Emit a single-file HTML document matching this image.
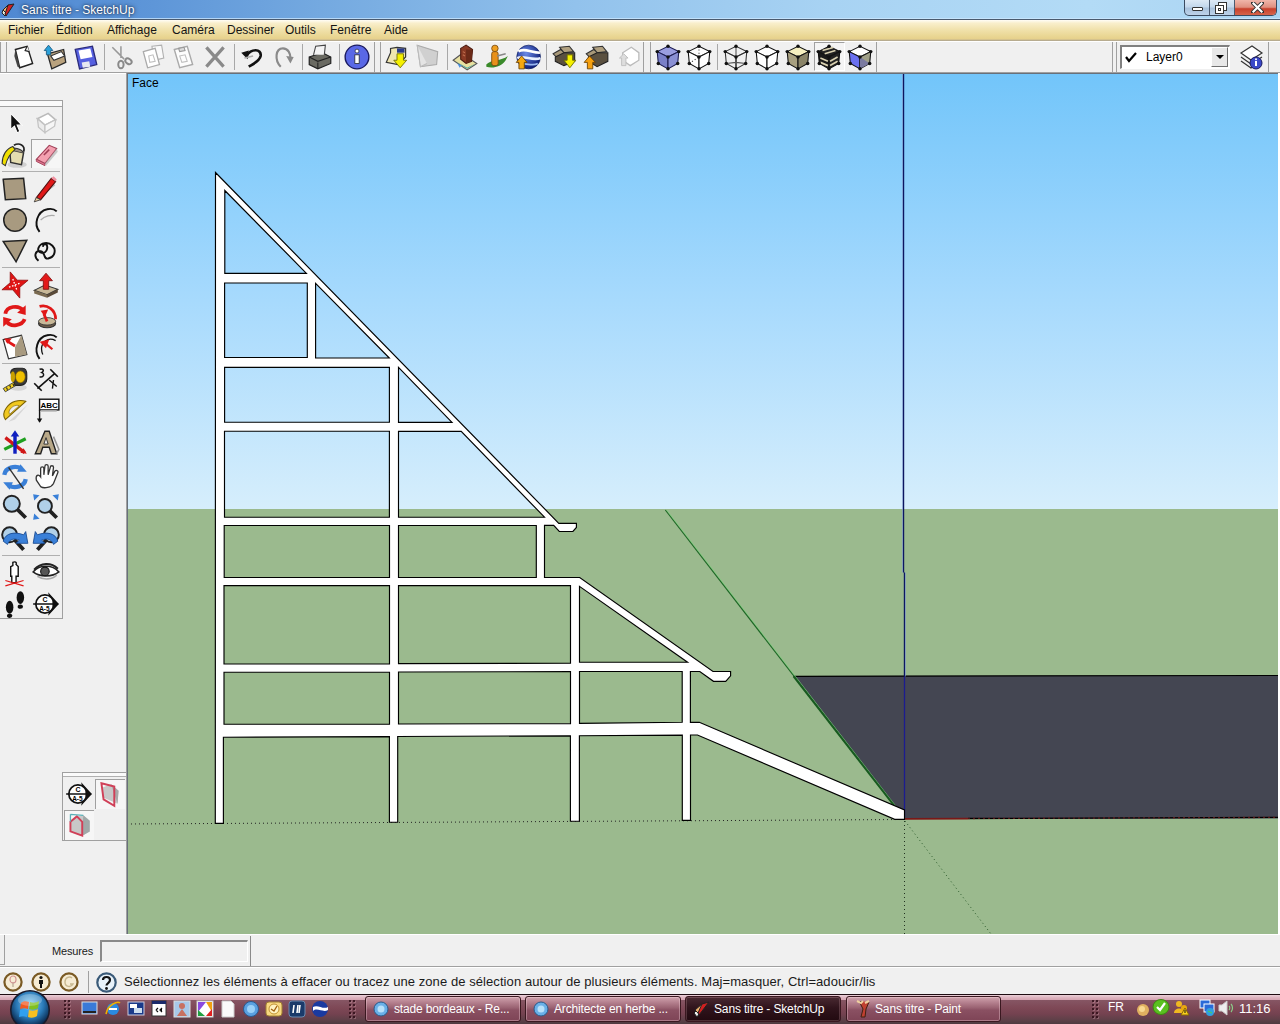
<!DOCTYPE html>
<html><head><meta charset="utf-8">
<style>
*{margin:0;padding:0;box-sizing:border-box}
html,body{width:1280px;height:1024px;overflow:hidden;background:#f0f0f0;font-family:"Liberation Sans",sans-serif;font-size:12px;color:#000}
.a{position:absolute}
svg{display:block}
#title{left:0;top:0;width:1280px;height:20px;background:linear-gradient(90deg,#4f88d2 0%,#5e96d8 12%,#74a9e0 25%,#92c2ec 45%,#a8d3f3 65%,#b3dbf6 85%,#aad4f2 100%);border-bottom:1px solid #4a5a6e}
#title .t{left:21px;top:3px;color:#fff;font-size:12px;line-height:14px;text-shadow:0 0 4px rgba(20,40,70,.9),0 0 2px rgba(20,40,70,.8)}
#menu{left:0;top:20px;width:1280px;height:21px;background:linear-gradient(#fffdf6 0%,#f9efcc 15%,#f1e2ad 45%,#ead795 75%,#e6d18c 90%,#c9b98e 95%,#a8a090 100%)}
#menu span{position:absolute;top:3px;font-size:12px;line-height:14px;color:#141414}
#tb{left:0;top:41px;width:1280px;height:33px;background:#f0f0f0}
.sep{position:absolute;width:1px;background:#a8a8a8}
#left{left:0;top:74px;width:128px;height:861px;background:#f0f0f0}
#vp{left:128px;top:74px;width:1150px;height:860px;overflow:hidden}
#meas{left:0;top:934px;width:1280px;height:33px;background:#f0f0f0}
#status{left:0;top:967px;width:1280px;height:27px;background:#f0f0f0}
#task{left:0;top:994px;width:1280px;height:30px;background:linear-gradient(#1e0c12 0,#1e0c12 1px,#ead0d8 1px,#dcb0bc 4px,#d4a4b2 6px,#865664 6px,#7e4856 14px,#744250 20px,#5e4048 26px,#4e3a40 100%)}
.tbtn{position:absolute;top:2px;height:26px;border:1px solid #3a1820;border-radius:3px;background:linear-gradient(#d0a4ae 0%,#b88492 20%,#9a6272 45%,#8a5062 55%,#7e4456 100%);color:#fff;font-size:12px;line-height:14px;letter-spacing:-0.15px;box-shadow:inset 0 0 0 1px rgba(255,220,230,.35)}
.tbtn span{position:absolute;left:28px;top:5px;white-space:nowrap}
.tbtn.act{background:linear-gradient(#4a2a32 0%,#30141c 45%,#220a10 100%);box-shadow:inset 0 0 0 1px rgba(255,200,210,.2)}
</style></head><body>

<div id="title" class="a">
<div class="a" style="left:0;top:18px;width:1280px;height:1px;background:rgba(205,232,255,.75)"></div>
<svg class="a" style="left:1px;top:2px" width="15" height="16" viewBox="0 0 15 16"><path d="M2 8 L7 3 L10 5 L5 11 Z" fill="#f0b070" stroke="#222" stroke-width="1"/><path d="M2 8 L5 11 L4 14 L1 11 Z" fill="#e8f0e0" stroke="#222" stroke-width="1"/><path d="M7 3 L13 2 L5 14 L4 12 Z" fill="#d02020" stroke="#222" stroke-width="1"/></svg>
<div class="a t">Sans titre - SketchUp</div>
<div class="a" style="left:1184px;top:0;width:93px;height:16px;border:1px solid #3a4a60;border-top:none;border-radius:0 0 5px 5px;overflow:hidden;background:linear-gradient(#dce9f5 0%,#c4d8ec 45%,#a9c2dc 55%,#bdd3ea 100%)">
<div class="a" style="left:24px;top:0;width:1px;height:16px;background:#4a5a70"></div>
<div class="a" style="left:49px;top:0;width:1px;height:16px;background:#4a5a70"></div>
<div class="a" style="left:50px;top:0;width:43px;height:16px;background:linear-gradient(#f0b6aa 0%,#e09080 45%,#c8402c 55%,#d86a50 100%)"></div>
<div class="a" style="left:7px;top:7px;width:11px;height:4px;background:#fff;border:1px solid #333;border-radius:1px"></div>
<div class="a" style="left:33px;top:2px;width:9px;height:9px;background:#fff;border:1px solid #333"></div>
<div class="a" style="left:30px;top:5px;width:9px;height:9px;background:#fff;border:1px solid #333"><div class="a" style="left:2px;top:2px;width:3px;height:3px;border:1px solid #333"></div></div>
<svg class="a" style="left:66px;top:2px" width="13" height="11" viewBox="0 0 13 11"><path d="M2 1 L11 10 M11 1 L2 10" stroke="#333" stroke-width="4" stroke-linecap="square"/><path d="M2.5 1.5 L10.5 9.5 M10.5 1.5 L2.5 9.5" stroke="#fff" stroke-width="2.2" stroke-linecap="square"/></svg>
</div>
</div>
<div id="menu" class="a">
<span style="left:8px">Fichier</span><span style="left:56px">Édition</span><span style="left:107px">Affichage</span><span style="left:172px">Caméra</span><span style="left:227px">Dessiner</span><span style="left:285px">Outils</span><span style="left:330px">Fenêtre</span><span style="left:384px">Aide</span>
</div>
<div id="tb" class="a">
<div class="a" style="left:0;top:0;width:1280px;height:1px;background:#fff"></div>
<div class="a" style="left:0;top:31px;width:1280px;height:1px;background:#a0a0a0"></div>
<div class="a" style="left:0;top:32px;width:126px;height:1px;background:#fff"></div>
<div class="a" style="left:126px;top:32px;width:1152px;height:1px;background:#68707a"></div>
<div class="a" style="left:1278px;top:32px;width:2px;height:1px;background:#fff"></div>
<div class="a" style="left:0px;top:1px;width:1px;height:30px;background:#a0a0a0"></div>
<div class="a" style="left:6px;top:1px;width:1px;height:30px;background:#a0a0a0"></div>
<div class="a" style="left:374px;top:1px;width:1px;height:30px;background:#a0a0a0"></div>
<div class="a" style="left:380px;top:1px;width:1px;height:30px;background:#a0a0a0"></div>
<div class="a" style="left:643px;top:1px;width:1px;height:30px;background:#a0a0a0"></div>
<div class="a" style="left:650px;top:1px;width:1px;height:30px;background:#a0a0a0"></div>
<div class="a" style="left:876px;top:1px;width:1px;height:30px;background:#a0a0a0"></div>
<div class="a" style="left:1112px;top:1px;width:1px;height:30px;background:#a0a0a0"></div>
<div class="a" style="left:1116px;top:1px;width:1px;height:30px;background:#a0a0a0"></div>
<div class="a" style="left:1268px;top:1px;width:1px;height:30px;background:#a0a0a0"></div>
<div class="sep" style="left:104px;top:3px;height:26px"></div>
<div class="sep" style="left:234px;top:3px;height:26px"></div>
<div class="sep" style="left:302px;top:3px;height:26px"></div>
<div class="sep" style="left:339px;top:3px;height:26px"></div>
<div class="sep" style="left:447px;top:3px;height:26px"></div>
<div class="sep" style="left:546px;top:3px;height:26px"></div>
<div class="sep" style="left:717px;top:3px;height:26px"></div>
<div class="a" style="left:814px;top:1px;width:31px;height:29px;border-left:1px solid #a0a0a0;border-top:1px solid #a0a0a0;border-right:1px solid #fff;border-bottom:1px solid #fff;background:#f4f4f4"></div>
<svg class="a" style="left:10px;top:-41px;margin-top:43px" width="28" height="28" viewBox="0 0 26 26"><path d="M5 6 L16 3 L21 19 L9 23 Z" fill="#fff" stroke="#222" stroke-width="1.3"/><path d="M16 3 L14 7 L18 8" fill="#eee" stroke="#222" stroke-width="1"/><path d="M5 6 L9 23 L7 22 L4 12Z" fill="#444"/></svg>
<svg class="a" style="left:41px;top:-41px;margin-top:43px" width="28" height="28" viewBox="0 0 26 26"><path d="M6 10 L21 6 L23 18 L10 24 Z" fill="#b9a27e" stroke="#2a2a2a" stroke-width="1.2"/><path d="M9 12 L19 8 L22 12 L12 16 Z" fill="#fff" stroke="#333" stroke-width="1"/><path d="M3 7 L7 2 L11 7 L9 7 L9 11 L5 11 L5 7Z" fill="#2aa0d8" stroke="#1a5a80" stroke-width=".8"/></svg>
<svg class="a" style="left:72px;top:-41px;margin-top:43px" width="28" height="28" viewBox="0 0 26 26"><path d="M3 6 L19 3 L23 20 L7 24 Z" fill="#5660e0" stroke="#2a2a7a" stroke-width="1.2"/><path d="M6 7 L17 5 L19 13 L8 15 Z" fill="#fff"/><path d="M9 18 L16 17 L17 22 L10 23 Z" fill="#e8e8f0"/></svg>
<svg class="a" style="left:108px;top:-41px;margin-top:43px" width="28" height="28" viewBox="0 0 26 26"><path d="M4 4 L15 15 M12 3 L12 14" stroke="#999" stroke-width="1.4" fill="none"/><ellipse cx="12" cy="20" rx="2.5" ry="3.5" fill="none" stroke="#8a8a8a" stroke-width="1.8"/><ellipse cx="19" cy="17" rx="3.2" ry="2.3" transform="rotate(35 19 17)" fill="none" stroke="#8a8a8a" stroke-width="1.8"/></svg>
<svg class="a" style="left:139px;top:-41px;margin-top:43px" width="28" height="28" viewBox="0 0 26 26"><path d="M12 3 L21 2 L23 14 L14 16Z" fill="#fafafa" stroke="#b0b0b0" stroke-width="1"/><path d="M4 8 L15 5 L19 20 L8 23 Z" fill="#fff" stroke="#aaa" stroke-width="1.2"/><path d="M9 12 L13 11 L15 17 L10 18Z" fill="none" stroke="#c0c0c0"/></svg>
<svg class="a" style="left:170px;top:-41px;margin-top:43px" width="28" height="28" viewBox="0 0 26 26"><path d="M4 6 L16 3 L21 20 L9 23 Z" fill="#fdfdfd" stroke="#aaa" stroke-width="1.3"/><path d="M8 5 L13 4 L14 7 L9 8Z" fill="#ddd" stroke="#999"/><path d="M9 12 L14 11 L16 17 L11 18Z" fill="none" stroke="#c0c0c0"/></svg>
<svg class="a" style="left:201px;top:-41px;margin-top:43px" width="28" height="28" viewBox="0 0 26 26"><path d="M5 4 L21 22 M21 4 L5 22" stroke="#8a8a8a" stroke-width="3"/></svg>
<svg class="a" style="left:238px;top:-41px;margin-top:43px" width="28" height="28" viewBox="0 0 26 26"><path d="M8 12 C12 5 22 5 21 12 C20 17 13 20 10 22" fill="none" stroke="#111" stroke-width="2.5"/><path d="M3 9 L10 7 L9 15 Z" fill="#111"/><path d="M6 14 L14 12" stroke="#aaa" stroke-width="1.5"/></svg>
<svg class="a" style="left:270px;top:-41px;margin-top:43px" width="28" height="28" viewBox="0 0 26 26"><path d="M10 22 C4 16 5 5 12 5 C17 5 19 10 19 14" fill="none" stroke="#8a8a8a" stroke-width="2"/><path d="M15 12 L22 13 L19 19 Z" fill="#8a8a8a"/></svg>
<svg class="a" style="left:306px;top:-41px;margin-top:43px" width="28" height="28" viewBox="0 0 26 26"><path d="M3 13 L15 9 L23 13 L23 19 L11 24 L3 20 Z" fill="#6a6a62" stroke="#222" stroke-width="1.1"/><path d="M3 13 L11 17 L23 13" fill="none" stroke="#222"/><path d="M7 11 L9 3 L18 2 L17 11" fill="#f4f4f4" stroke="#444" stroke-width="1"/><path d="M11 18 L11 24" stroke="#222"/></svg>
<svg class="a" style="left:343px;top:-41px;margin-top:43px" width="28" height="28" viewBox="0 0 26 26"><circle cx="13" cy="13" r="11" fill="#5a68e6" stroke="#1a1a60" stroke-width="1.3"/><circle cx="13" cy="7.5" r="1.8" fill="#fff" stroke="#222" stroke-width=".6"/><rect x="11" y="11" width="4" height="8" fill="#fff" stroke="#222" stroke-width=".7"/></svg>
<svg class="a" style="left:383px;top:-41px;margin-top:43px" width="28" height="28" viewBox="0 0 26 26"><path d="M3 18 L7 9 L7 5 L13 4 L21 5 L21 13 L14 20 Z" fill="#f0e6b0" stroke="#333" stroke-width="1.1"/><rect x="13" y="5" width="7" height="4" fill="#2a3a8a"/><path d="M13 10 L19 10 L19 16 L22 16 L16 23 L10 16 L13 16Z" fill="#f5f000" stroke="#6a6a00" stroke-width=".8"/></svg>
<svg class="a" style="left:414px;top:-41px;margin-top:43px" width="28" height="28" viewBox="0 0 26 26"><path d="M3 2 L22 8 L21 20 L6 22 Z" fill="#d0d0d0" stroke="#aaa" stroke-width="1"/><path d="M3 2 L6 22 L12 19" fill="#e4e4e4" stroke="#bbb"/></svg>
<svg class="a" style="left:451px;top:-41px;margin-top:43px" width="28" height="28" viewBox="0 0 26 26"><path d="M2 16 L10 10 L24 19 L15 25 Z" fill="#e8e0a0" stroke="#555" stroke-width="1"/><path d="M4 17 L15 24 L23 19 L15 23Z" fill="#2aa0a8"/><path d="M6 19 L10 21 L8 23Z" fill="#4a90e0"/><path d="M9 5 L14 2 L20 6 L19 17 L14 19 L9 15 Z" fill="#8a3a24" stroke="#4a1a10" stroke-width="1"/><path d="M14 6 L20 6 L19 17 L14 19Z" fill="#6a2a18"/><path d="M11 8 L13 9 M11 11 L13 12" stroke="#c07050" stroke-width="1"/></svg>
<svg class="a" style="left:482px;top:-41px;margin-top:43px" width="28" height="28" viewBox="0 0 26 26"><path d="M4 20 C8 15 18 17 24 12 L22 16 C18 22 10 24 4 22Z" fill="#3a8a2a"/><rect x="9" y="8" width="6" height="13" rx="2" fill="#e8901a" stroke="#7a4a10" stroke-width=".8"/><circle cx="12" cy="5" r="3" fill="#f0a020" stroke="#7a4a10" stroke-width=".8"/><path d="M14 12 L22 10" stroke="#888" stroke-width="1.5"/></svg>
<svg class="a" style="left:513px;top:-41px;margin-top:43px" width="28" height="28" viewBox="0 0 26 26"><defs><radialGradient id="ge" cx="40%" cy="35%" r="65%"><stop offset="0" stop-color="#6a8ae8"/><stop offset="1" stop-color="#10207a"/></radialGradient></defs><circle cx="14.5" cy="13" r="11" fill="url(#ge)" stroke="#0a1a5a" stroke-width=".6"/><path d="M5 8 C10 4 17 9 25 9" fill="none" stroke="#fff" stroke-width="2.4"/><path d="M4 14 C10 11 18 17 25.5 14" fill="none" stroke="#e8f0ff" stroke-width="2.4"/><path d="M7 20 C12 18 18 22 23 19" fill="none" stroke="#9ab8f0" stroke-width="1.6"/><path d="M8 12 L13 18 L10.5 18 L10.5 24 L5.5 24 L5.5 18 L3 18Z" fill="#f5a810" stroke="#6a4000" stroke-width=".8"/></svg>
<svg class="a" style="left:551px;top:-41px;margin-top:43px" width="28" height="28" viewBox="0 0 26 26"><path d="M2 10 L9 6 L13 9 L6 14Z" fill="#a89878" stroke="#333" stroke-width="1"/><path d="M8 4 L17 3 L21 8 L12 9Z" fill="#b0a080" stroke="#333" stroke-width="1"/><path d="M4 13 L12 9 L22 9 L22 17 L12 21 L4 17Z" fill="#5a5040" stroke="#222" stroke-width="1"/><path d="M15 11 L20 11 L20 16 L23 16 L17.5 23 L12 16 L15 16Z" fill="#f5f000" stroke="#6a6a00" stroke-width=".8"/></svg>
<svg class="a" style="left:582px;top:-41px;margin-top:43px" width="28" height="28" viewBox="0 0 26 26"><path d="M4 10 L11 6 L15 9 L8 14Z" fill="#a89878" stroke="#333" stroke-width="1"/><path d="M10 4 L19 3 L23 8 L14 9Z" fill="#b0a080" stroke="#333" stroke-width="1"/><path d="M6 13 L14 9 L24 9 L24 17 L14 22 L6 17Z" fill="#5a5040" stroke="#222" stroke-width="1"/><path d="M7 12 L12.5 18 L10 18 L10 24 L5 24 L5 18 L2 18Z" fill="#f5a010" stroke="#6a4000" stroke-width=".8"/></svg>
<svg class="a" style="left:613px;top:-41px;margin-top:43px" width="28" height="28" viewBox="0 0 26 26"><path d="M9 9 L17 4 L24 9 L24 16 L16 21 L9 16Z" fill="#fff" stroke="#bbb" stroke-width="1.2"/><path d="M6 14 L10 10 L14 14 L12 14 L12 21 L8 21 L8 14Z" fill="#ddd" stroke="#bbb" stroke-width=".8"/></svg>
<svg class="a" style="left:654px;top:-41px;margin-top:43px" width="28" height="28" viewBox="0 0 26 26"><polygon points="3,8 13,3 23,8 13,13" fill="#9a9ee0" stroke="#1a1a50" stroke-width="1"/><polygon points="3,8 13,13 13,24 4,19" fill="#7a80c8" stroke="#1a1a50" stroke-width="1"/><polygon points="13,13 23,8 22,19 13,24" fill="#8a90d4" stroke="#1a1a50" stroke-width="1"/><circle cx="13" cy="3" r="1.6" fill="#111"/><circle cx="3" cy="8" r="1.6" fill="#111"/><circle cx="23" cy="8" r="1.6" fill="#111"/><circle cx="13" cy="13" r="1.6" fill="#111"/><circle cx="4" cy="19" r="1.6" fill="#111"/><circle cx="22" cy="19" r="1.6" fill="#111"/><circle cx="13" cy="24" r="1.6" fill="#111"/></svg>
<svg class="a" style="left:685px;top:-41px;margin-top:43px" width="28" height="28" viewBox="0 0 26 26"><polygon points="3,8 13,3 23,8 13,13" fill="#fff" stroke="#111" stroke-width="1"/><polygon points="3,8 13,13 13,24 4,19" fill="#fff" stroke="#111" stroke-width="1"/><polygon points="13,13 23,8 22,19 13,24" fill="#fff" stroke="#111" stroke-width="1"/><path d="M13 3 L13 13 M4 19 L13 13" stroke="#333" stroke-dasharray="1 2" fill="none"/><circle cx="13" cy="3" r="1.6" fill="#111"/><circle cx="3" cy="8" r="1.6" fill="#111"/><circle cx="23" cy="8" r="1.6" fill="#111"/><circle cx="13" cy="13" r="1.6" fill="#111"/><circle cx="4" cy="19" r="1.6" fill="#111"/><circle cx="22" cy="19" r="1.6" fill="#111"/><circle cx="13" cy="24" r="1.6" fill="#111"/></svg>
<svg class="a" style="left:722px;top:-41px;margin-top:43px" width="28" height="28" viewBox="0 0 26 26"><polygon points="3,8 13,3 23,8 13,13" fill="none" stroke="#333" stroke-width="1"/><polygon points="3,8 13,13 13,24 4,19" fill="none" stroke="#333" stroke-width="1"/><polygon points="13,13 23,8 22,19 13,24" fill="none" stroke="#333" stroke-width="1"/><path d="M13 3 L13 18 M4 19 L13 18 L22 19" stroke="#555" fill="none"/><circle cx="13" cy="3" r="1.6" fill="#111"/><circle cx="3" cy="8" r="1.6" fill="#111"/><circle cx="23" cy="8" r="1.6" fill="#111"/><circle cx="13" cy="13" r="1.6" fill="#111"/><circle cx="4" cy="19" r="1.6" fill="#111"/><circle cx="22" cy="19" r="1.6" fill="#111"/><circle cx="13" cy="24" r="1.6" fill="#111"/></svg>
<svg class="a" style="left:753px;top:-41px;margin-top:43px" width="28" height="28" viewBox="0 0 26 26"><polygon points="3,8 13,3 23,8 13,13" fill="#fff" stroke="#111" stroke-width="1"/><polygon points="3,8 13,13 13,24 4,19" fill="#fff" stroke="#111" stroke-width="1"/><polygon points="13,13 23,8 22,19 13,24" fill="#fff" stroke="#111" stroke-width="1"/><circle cx="13" cy="3" r="1.6" fill="#111"/><circle cx="3" cy="8" r="1.6" fill="#111"/><circle cx="23" cy="8" r="1.6" fill="#111"/><circle cx="13" cy="13" r="1.6" fill="#111"/><circle cx="4" cy="19" r="1.6" fill="#111"/><circle cx="22" cy="19" r="1.6" fill="#111"/><circle cx="13" cy="24" r="1.6" fill="#111"/></svg>
<svg class="a" style="left:784px;top:-41px;margin-top:43px" width="28" height="28" viewBox="0 0 26 26"><polygon points="3,8 13,3 23,8 13,13" fill="#f6f0c0" stroke="#111" stroke-width="1"/><polygon points="3,8 13,13 13,24 4,19" fill="#a8a080" stroke="#111" stroke-width="1"/><polygon points="13,13 23,8 22,19 13,24" fill="#8a8468" stroke="#111" stroke-width="1"/><circle cx="13" cy="3" r="1.6" fill="#111"/><circle cx="3" cy="8" r="1.6" fill="#111"/><circle cx="23" cy="8" r="1.6" fill="#111"/><circle cx="13" cy="13" r="1.6" fill="#111"/><circle cx="4" cy="19" r="1.6" fill="#111"/><circle cx="22" cy="19" r="1.6" fill="#111"/><circle cx="13" cy="24" r="1.6" fill="#111"/></svg>
<svg class="a" style="left:815px;top:-41px;margin-top:43px" width="28" height="28" viewBox="0 0 26 26"><polygon points="3,8 13,3 23,8 13,13" fill="#222" stroke="#111" stroke-width="1"/><polygon points="3,8 13,13 13,24 4,19" fill="#1a1a1a" stroke="#111" stroke-width="1"/><polygon points="13,13 23,8 22,19 13,24" fill="#222" stroke="#111" stroke-width="1"/><path d="M7 7 L17 4 M9 10 L19 7 M5 14 L12 17 M5 18 L12 21 M14 17 L21 13 M14 21 L21 17" stroke="#d8d0b0" stroke-width="1.6"/><circle cx="13" cy="3" r="1.6" fill="#111"/><circle cx="3" cy="8" r="1.6" fill="#111"/><circle cx="23" cy="8" r="1.6" fill="#111"/><circle cx="13" cy="13" r="1.6" fill="#111"/><circle cx="4" cy="19" r="1.6" fill="#111"/><circle cx="22" cy="19" r="1.6" fill="#111"/><circle cx="13" cy="24" r="1.6" fill="#111"/></svg>
<svg class="a" style="left:846px;top:-41px;margin-top:43px" width="28" height="28" viewBox="0 0 26 26"><polygon points="3,8 13,3 23,8 13,13" fill="#fff" stroke="#111" stroke-width="1"/><polygon points="3,8 13,13 13,24 4,19" fill="#6a70f0" stroke="#111" stroke-width="1"/><polygon points="13,13 23,8 22,19 13,24" fill="#a0a088" stroke="#111" stroke-width="1"/><path d="M13 13 L22 19 L13 24Z" fill="#7a7aa0"/><circle cx="13" cy="3" r="1.6" fill="#111"/><circle cx="3" cy="8" r="1.6" fill="#111"/><circle cx="23" cy="8" r="1.6" fill="#111"/><circle cx="13" cy="13" r="1.6" fill="#111"/><circle cx="4" cy="19" r="1.6" fill="#111"/><circle cx="22" cy="19" r="1.6" fill="#111"/><circle cx="13" cy="24" r="1.6" fill="#111"/></svg>
<div class="a" style="left:1120px;top:4px;width:110px;height:24px;border-top:2px solid #808080;border-left:2px solid #808080;border-right:1px solid #fff;border-bottom:1px solid #fff;background:#fff"></div>
<svg class="a" style="left:1124px;top:10px" width="14" height="12" viewBox="0 0 14 12"><path d="M2 6 L5 10 L12 2" fill="none" stroke="#000" stroke-width="2.2"/></svg>
<div class="a" style="left:1146px;top:9px;font-size:12px;line-height:14px">Layer0</div>
<div class="a" style="left:1211px;top:6px;width:17px;height:20px;background:#e8e8e8;border-right:1px solid #707070;border-bottom:1px solid #707070;border-left:1px solid #fff;border-top:1px solid #fff"></div>
<svg class="a" style="left:1214px;top:13px" width="12" height="6" viewBox="0 0 12 6"><path d="M2 1 L10 1 L6 5Z" fill="#000"/></svg>
<svg class="a" style="left:1238px;top:2px" width="26" height="28" viewBox="0 0 26 28"><path d="M3 10 L14 3 L24 10 L13 17Z" fill="#fff" stroke="#333" stroke-width="1.2"/><path d="M3 14 L13 21 L24 14" fill="none" stroke="#333" stroke-width="1.2"/><path d="M3 18 L13 25 L20 20" fill="none" stroke="#333" stroke-width="1.2"/><circle cx="18" cy="20" r="6" fill="#3a48c8" stroke="#1a1a60"/><rect x="17" y="18" width="2" height="5" fill="#fff"/><circle cx="18" cy="16.3" r="1" fill="#fff"/></svg>
</div>
<div id="left" class="a">
<div class="a" style="left:0;top:26px;width:62px;height:1px;background:#a0a0a0"></div>
<div class="a" style="left:0;top:27px;width:62px;height:5px;background:#fafafa"></div>
<div class="a" style="left:0;top:32px;width:62px;height:1px;background:#a0a0a0"></div>
<div class="a" style="left:62px;top:26px;width:1px;height:519px;background:#a0a0a0"></div>
<div class="a" style="left:0;top:544px;width:62px;height:1px;background:#a0a0a0"></div>
<div class="a" style="left:31px;top:65px;width:30px;height:29px;border-left:1px solid #a0a0a0;border-top:1px solid #a0a0a0;background:#f6f6f6"></div>
<div class="a" style="left:2px;top:97px;width:58px;height:1px;background:#b0b0b0"></div>
<div class="a" style="left:2px;top:193px;width:58px;height:1px;background:#b0b0b0"></div>
<div class="a" style="left:2px;top:289px;width:58px;height:1px;background:#b0b0b0"></div>
<div class="a" style="left:2px;top:385px;width:58px;height:1px;background:#b0b0b0"></div>
<div class="a" style="left:2px;top:481px;width:58px;height:1px;background:#b0b0b0"></div>
<svg class="a" style="left:0px;top:34px" width="30" height="30" viewBox="0 0 28 28"><path d="M10 5 L10 20 L13.5 17 L16 23 L18.5 22 L16 16 L20.5 16 Z" fill="#111" stroke="#fff" stroke-width="1"/></svg>
<svg class="a" style="left:31px;top:34px" width="30" height="30" viewBox="0 0 28 28"><path d="M6 10 L16 5 L23 11 L13 16Z" fill="#fff" stroke="#bbb" stroke-width="1.5"/><path d="M6 10 L13 16 L13 23 L7 18Z" fill="#ececec" stroke="#c4c4c4" stroke-width="1.2"/><path d="M13 16 L23 11 L22 17 L13 23Z" fill="#f6f6f6" stroke="#c4c4c4" stroke-width="1.2"/></svg>
<svg class="a" style="left:0px;top:66px" width="30" height="30" viewBox="0 0 28 28"><ellipse cx="16" cy="23" rx="9" ry="3" fill="#bbb" opacity=".6"/><path d="M9 9 L22 12 L20 23 L10 21 Z" fill="#e4dcb0" stroke="#333" stroke-width="1.4"/><path d="M9 9 C12 6 20 8 22 12" fill="#9a9080" stroke="#333"/><path d="M13 5 C18 2 24 5 22 11" fill="none" stroke="#222" stroke-width="1.6"/><path d="M2 22 C2 14 6 8 12 6 L14 9 C10 12 7 16 5 24Z" fill="#f0e000" stroke="#333" stroke-width="1"/></svg>
<svg class="a" style="left:31px;top:66px" width="30" height="30" viewBox="0 0 28 28"><path d="M5 18 L17 5 L24 8 L13 22Z" fill="#f4a0b0" stroke="#a04058" stroke-width="1"/><path d="M5 18 L13 22 L13 24 L5 20Z" fill="#e07890" stroke="#a04058" stroke-width=".8"/><path d="M13 22 L24 8 L25 11 L14 24Z" fill="#aaa" opacity=".6"/><path d="M12 14 L17 9" stroke="#a04058" stroke-width="1.5"/></svg>
<svg class="a" style="left:0px;top:100px" width="30" height="30" viewBox="0 0 28 28"><path d="M3 5 L22 4 L24 23 L5 24 Z" fill="#a89a80" stroke="#222" stroke-width="1.4"/></svg>
<svg class="a" style="left:31px;top:100px" width="30" height="30" viewBox="0 0 28 28"><path d="M4 24 L22 10" stroke="#999" stroke-width="2" opacity=".6"/><path d="M5 22 L19 4 L23 7 L9 24 Z" fill="#e01818" stroke="#501010" stroke-width="1"/><path d="M5 22 L9 24 L3 26Z" fill="#f0d0a0" stroke="#333" stroke-width=".8"/><path d="M19 4 L23 7 L24 5 L21 2Z" fill="#f090a0"/></svg>
<svg class="a" style="left:0px;top:131px" width="30" height="30" viewBox="0 0 28 28"><circle cx="14" cy="14" r="10.5" fill="#a89a80" stroke="#222" stroke-width="1.4"/></svg>
<svg class="a" style="left:31px;top:131px" width="30" height="30" viewBox="0 0 28 28"><path d="M8 25 C2 18 6 6 15 4 C19 3 22 4 24 6" fill="none" stroke="#111" stroke-width="1.8"/><path d="M9 14 C13 10 19 9 22 10" fill="none" stroke="#aaa" stroke-width="1.2"/></svg>
<svg class="a" style="left:0px;top:161px" width="30" height="30" viewBox="0 0 28 28"><path d="M3 6 L25 5 L15 25Z" fill="#a89a80" stroke="#222" stroke-width="1.4"/></svg>
<svg class="a" style="left:31px;top:161px" width="30" height="30" viewBox="0 0 28 28"><path d="M7 24 C2 20 4 14 9 15 C14 16 11 23 16 22 C22 21 24 14 20 10 C16 6 9 7 7 12 C5 17 14 19 15 13 C16 8 12 7 11 11" fill="none" stroke="#111" stroke-width="1.8"/></svg>
<svg class="a" style="left:0px;top:196px" width="30" height="30" viewBox="0 0 28 28"><g transform="rotate(-20 14 14)"><path d="M14 1 L17.5 10.5 L27 14 L17.5 17.5 L14 27 L10.5 17.5 L1 14 L10.5 10.5 Z" fill="#e01414" stroke="#901010" stroke-width=".7"/><path d="M14 8 L14 20 M8 14 L20 14" stroke="#fff" stroke-width="1.2" stroke-dasharray="1.5 1.5"/></g></svg>
<svg class="a" style="left:31px;top:196px" width="30" height="30" viewBox="0 0 28 28"><path d="M3 19 L13 14 L25 18 L15 23Z" fill="#c8b898" stroke="#333" stroke-width="1"/><path d="M3 19 L15 23 L15 26 L3 22Z" fill="#7a6a50"/><path d="M15 23 L25 18 L25 21 L15 26Z" fill="#5a4a38"/><path d="M14 3 L20 10 L16.5 10 L16.5 18 L11.5 18 L11.5 10 L8 10Z" fill="#e21a1a" stroke="#801010" stroke-width=".8"/></svg>
<svg class="a" style="left:0px;top:227px" width="30" height="30" viewBox="0 0 28 28"><path d="M5 12 C6 5 17 3 22 9" fill="none" stroke="#e01818" stroke-width="3.5"/><path d="M24 4 L24 13 L16 11Z" fill="#e01818"/><path d="M23 17 C21 23 10 25 6 19" fill="none" stroke="#e01818" stroke-width="3.5"/><path d="M3 24 L3 15 L11 17Z" fill="#e01818"/></svg>
<svg class="a" style="left:31px;top:227px" width="30" height="30" viewBox="0 0 28 28"><ellipse cx="15" cy="21" rx="8" ry="4" fill="#6a5a48" stroke="#333"/><ellipse cx="15" cy="19" rx="8" ry="3.5" fill="#c8b898" stroke="#333" stroke-width=".8"/><path d="M8 5 C15 3 23 8 23 17" fill="none" stroke="#e01818" stroke-width="2.5"/><path d="M9 9 L16 8 L13 15Z" fill="#e01818"/><path d="M12 12 L15 19" stroke="#e01818" stroke-width="2.5"/></svg>
<svg class="a" style="left:0px;top:257px" width="30" height="30" viewBox="0 0 28 28"><path d="M3 8 L20 4 L25 22 L8 26 Z" fill="#fff" stroke="#333" stroke-width="1.2"/><path d="M14 15 L25 22 L14 24 Z M14 15 L20 4 L25 22Z" fill="#a89a80"/><path d="M14 14 L6 9" stroke="#e01818" stroke-width="2.5"/><path d="M4 7 L11 7 L7 12Z" fill="#e01818"/></svg>
<svg class="a" style="left:31px;top:257px" width="30" height="30" viewBox="0 0 28 28"><path d="M8 26 C2 18 6 6 15 4 C19 3 22 4 24 6" fill="none" stroke="#111" stroke-width="1.8"/><path d="M11 22 C8 15 11 10 16 8 C19 7 21 8 23 9" fill="none" stroke="#111" stroke-width="1.2"/><path d="M8 10 L17 8 L14 16Z" fill="#e01818"/><path d="M14 12 L20 17" stroke="#e01818" stroke-width="2"/></svg>
<svg class="a" style="left:0px;top:291px" width="30" height="30" viewBox="0 0 28 28"><ellipse cx="17" cy="21" rx="8" ry="3" fill="#bbb" opacity=".5"/><path d="M3 22 L13 16 L15 19 L5 25Z" fill="#f0d020" stroke="#333" stroke-width=".8"/><path d="M6 21 L7 23 M9 19 L10 21 M12 17.5 L13 19.5" stroke="#222" stroke-width="1"/><path d="M10 7 C10 4 13 3 16 3 L21 3 C24 3 25 6 25 9 L25 13 C25 17 22 19 19 19 L14 19 Z" fill="#3a3a3a" stroke="#222"/><ellipse cx="19" cy="11" rx="4.5" ry="5.5" fill="#f0c000" stroke="#8a6a00" stroke-width=".6"/><ellipse cx="12" cy="11" rx="2" ry="5" fill="#c8a000"/></svg>
<svg class="a" style="left:31px;top:291px" width="30" height="30" viewBox="0 0 28 28"><path d="M6 22 L22 8" stroke="#111" stroke-width="1.5"/><path d="M3 17 L10 24 M18 4 L25 11" stroke="#111" stroke-width="1.5"/><path d="M8 4 C11 3 13 5 10 7 C13 8 12 12 8 11" fill="none" stroke="#111" stroke-width="1.4"/><path d="M17 14 L24 20 M21 14 L20 22" stroke="#111" stroke-width="1.3"/></svg>
<svg class="a" style="left:0px;top:322px" width="30" height="30" viewBox="0 0 28 28"><path d="M8 24 L26 8 L14 22Z" fill="#bbb" opacity=".5"/><path d="M5 22 L24 5 C18 3 10 5 6 11 C3 15 3 19 5 22Z" fill="#f0c820" stroke="#7a6000" stroke-width="1"/><path d="M9 17 L18 9 C14 8 11 10 9 13 C8 14.5 8.5 16 9 17Z" fill="#f0f0f0" stroke="#7a6000" stroke-width=".6"/></svg>
<svg class="a" style="left:31px;top:322px" width="30" height="30" viewBox="0 0 28 28"><rect x="8" y="3" width="18" height="10" fill="#fff" stroke="#111" stroke-width="1.3"/><text x="17" y="11.5" font-size="7.5" font-family="Liberation Sans" font-weight="bold" text-anchor="middle">ABC</text><path d="M8 13 L8 24" stroke="#111" stroke-width="1.3"/><path d="M5.5 21 L8 25 L10.5 21Z" fill="#111"/><path d="M9 14 L24 14" stroke="#bbb" stroke-width="1.5"/></svg>
<svg class="a" style="left:0px;top:354px" width="30" height="30" viewBox="0 0 28 28"><path d="M4 20 L24 10" stroke="#20a020" stroke-width="3"/><path d="M5 9 L23 23" stroke="#d01818" stroke-width="3"/><path d="M14 24 L14 6" stroke="#1020c0" stroke-width="3.2"/><path d="M10 8 L14 2 L18 8Z" fill="#1020c0"/><path d="M19 23 L25 24 L22 19Z" fill="#d01818"/></svg>
<svg class="a" style="left:31px;top:354px" width="30" height="30" viewBox="0 0 28 28"><path d="M4 24 L13 3 L17 3 L24 24 L19 24 L17 18 L11 18 L9 24Z" fill="#b8a888" stroke="#222" stroke-width="1.3"/><path d="M12 15 L16 15 L14 9Z" fill="#f0f0f0" stroke="#222" stroke-width=".8"/><path d="M24 24 L26 20 L21 8" fill="none" stroke="#999" stroke-width="1.5"/></svg>
<svg class="a" style="left:0px;top:388px" width="30" height="30" viewBox="0 0 28 28"><path d="M4 12 C5 5 14 3 20 6" fill="none" stroke="#3a80d8" stroke-width="4"/><path d="M24 16 C23 23 14 25 8 22" fill="none" stroke="#3a80d8" stroke-width="4"/><path d="M8 5 L22 25" stroke="#333" stroke-width="1.3"/><path d="M19 2 L25 9 L16 9Z" fill="#3a80d8"/><path d="M9 26 L3 19 L12 19Z" fill="#3a80d8"/></svg>
<svg class="a" style="left:31px;top:388px" width="30" height="30" viewBox="0 0 28 28"><path d="M5 17 C4 12 7 11 9 14 L9 6 C9 4 12 4 12 6 L12 12 L13 4 C13 2 16 2 16 4 L16 12 L18 5 C18 3 21 3 21 5 L20 13 L22 9 C23 7 26 8 25 10 L21 20 C19 24 12 25 9 23 Z" fill="#fff" stroke="#333" stroke-width="1.2"/></svg>
<svg class="a" style="left:0px;top:418px" width="30" height="30" viewBox="0 0 28 28"><path d="M16 16 L24 24" stroke="#222" stroke-width="3.5"/><circle cx="11" cy="11" r="7.5" fill="#b0d0e8" stroke="#222" stroke-width="1.8"/></svg>
<svg class="a" style="left:31px;top:418px" width="30" height="30" viewBox="0 0 28 28"><path d="M16 16 L24 24" stroke="#222" stroke-width="3.5"/><circle cx="13" cy="13" r="6.5" fill="#b0d0e8" stroke="#222" stroke-width="1.8"/><path d="M2 2 L8 3 L3 8Z M26 2 L20 3 L25 8Z M2 26 L3 20 L8 25Z" fill="#3a80d8"/></svg>
<svg class="a" style="left:0px;top:449px" width="30" height="30" viewBox="0 0 28 28"><circle cx="9" cy="11" r="7" fill="#b0d0e8" stroke="#222" stroke-width="1.8"/><path d="M14 16 L22 25" stroke="#222" stroke-width="3.5"/><path d="M3 17 C5 9 14 8 22 11 L24 8 L26 19 L15 19 L18 16 C13 14 9 15 7 20Z" fill="#3a80d8" stroke="#1a4a90" stroke-width=".8"/></svg>
<svg class="a" style="left:31px;top:449px" width="30" height="30" viewBox="0 0 28 28"><circle cx="19" cy="11" r="7" fill="#b0d0e8" stroke="#222" stroke-width="1.8"/><path d="M14 16 L6 25" stroke="#222" stroke-width="3.5"/><path d="M25 17 C23 9 14 8 6 11 L4 8 L2 19 L13 19 L10 16 C15 14 19 15 21 20Z" fill="#3a80d8" stroke="#1a4a90" stroke-width=".8"/></svg>
<svg class="a" style="left:0px;top:484px" width="30" height="30" viewBox="0 0 28 28"><path d="M12 4 C14 3 16 4 15 6 L17 8 L17 17 L15 17 L15 23 L11 23 L11 17 L10 17 L10 8 L12 7Z" fill="#fff" stroke="#111" stroke-width="1.3"/><path d="M5 21 L22 26 M5 26 L22 21" stroke="#e01818" stroke-width="1.2"/></svg>
<svg class="a" style="left:31px;top:484px" width="30" height="30" viewBox="0 0 28 28"><path d="M2 13 C8 6 20 6 26 13 C20 18 8 18 2 13Z" fill="#fff" stroke="#222" stroke-width="1.5"/><circle cx="13" cy="12.5" r="4" fill="#555" stroke="#111"/><path d="M3 11 C9 4 19 4 25 10" fill="none" stroke="#222" stroke-width="2"/><path d="M6 17 C12 21 20 20 24 16" fill="none" stroke="#aaa" stroke-width="1.5"/></svg>
<svg class="a" style="left:0px;top:515px" width="30" height="30" viewBox="0 0 28 28"><ellipse cx="9" cy="17" rx="3.5" ry="6" fill="#111"/><ellipse cx="9" cy="25" rx="2.5" ry="2" fill="#111"/><ellipse cx="19" cy="8" rx="3.5" ry="6" fill="#111"/><ellipse cx="19" cy="16.5" rx="2.5" ry="2" fill="#111"/></svg>
<svg class="a" style="left:31px;top:515px" width="30" height="30" viewBox="0 0 28 28"><path d="M16 3 L26 14 L16 25 L17 20 L20 14 L17 8Z" fill="#111"/><circle cx="13" cy="14" r="8.5" fill="#fff" stroke="#111" stroke-width="1.6"/><path d="M20 9 L26 14 L20 19Z" fill="#111"/><path d="M2 14 L22 14" stroke="#111" stroke-width="1.4"/><text x="13" y="12" font-size="6.5" font-family="Liberation Sans" font-weight="bold" text-anchor="middle">C</text><text x="12.5" y="20.5" font-size="6" font-family="Liberation Sans" font-weight="bold" text-anchor="middle">A-5</text></svg>
<div class="a" style="left:126px;top:-1px;width:1px;height:861px;background:#a0a0a0"></div>
<div class="a" style="left:127px;top:-1px;width:1px;height:861px;background:#68707a"></div>
<div class="a" style="left:62px;top:698px;width:64px;height:69px;border:1px solid #a0a0a0;border-right:none"></div>
<div class="a" style="left:63px;top:699px;width:63px;height:4px;background:#fafafa;border-bottom:1px solid #b0b0b0"></div>
<div class="a" style="left:95px;top:705px;width:30px;height:30px;border-left:1px solid #a0a0a0;border-top:1px solid #a0a0a0;background:#f6f6f6"></div>
<div class="a" style="left:64px;top:736px;width:30px;height:30px;border-left:1px solid #a0a0a0;border-top:1px solid #a0a0a0;background:#f6f6f6"></div>
<svg class="a" style="left:64px;top:705px" width="30" height="30" viewBox="0 0 28 28"><path d="M16 3 L26 14 L16 25 L17 20 L20 14 L17 8Z" fill="#111"/><circle cx="13" cy="14" r="8.5" fill="#fff" stroke="#111" stroke-width="1.6"/><path d="M20 9 L26 14 L20 19Z" fill="#111"/><path d="M2 14 L22 14" stroke="#111" stroke-width="1.4"/><text x="13" y="12" font-size="6.5" font-family="Liberation Sans" font-weight="bold" text-anchor="middle">C</text><text x="12.5" y="20.5" font-size="6" font-family="Liberation Sans" font-weight="bold" text-anchor="middle">A-5</text></svg>
<svg class="a" style="left:95px;top:705px" width="30" height="30" viewBox="0 0 28 28"><path d="M7 8 L15 5 L22 11 L21 23 L14 20 L7 17Z" fill="#c8c8c8"/><path d="M15 5 L22 11 L21 23" fill="#a8a8a8"/><path d="M6 4 L18 7 L18 25 L8 19Z" fill="none" stroke="#d04058" stroke-width="1.8"/></svg>
<svg class="a" style="left:64px;top:736px" width="30" height="30" viewBox="0 0 28 28"><path d="M6 11 L12 6 L18 5 L24 10 L24 20 L17 24 L6 20Z" fill="#c8c8c8"/><path d="M18 5 L24 10 L24 20 L17 24Z" fill="#a0a8a8"/><path d="M6 11 L12 6 L17 11 L17 24 L6 20Z" fill="none" stroke="#d04058" stroke-width="1.8"/><path d="M6 4 L6 11 M6 4 L18 5" stroke="#5ab0b8" stroke-width="1.2"/></svg>
</div>
<div id="vp" class="a">
<svg width="1150" height="860" viewBox="128 74 1150 860" style="display:block">
<defs>
<linearGradient id="sky" x1="0" y1="74" x2="0" y2="509" gradientUnits="userSpaceOnUse">
<stop offset="0" stop-color="#72c5fa"/><stop offset="0.5" stop-color="#a5d9fd"/><stop offset="1" stop-color="#d6eefc"/>
</linearGradient>
</defs>
<rect x="127" y="74" width="1151" height="435" fill="url(#sky)"/>
<rect x="127" y="509" width="1151" height="425" fill="#9bba8e"/>
<path d="M793.6 676 L1278 675.5 L1278 818.6 L904.5 819 Z" fill="#444652"/>
<line x1="793.6" y1="676.3" x2="1278" y2="675.5" stroke="#000" stroke-width="1.2"/>
<line x1="666.3" y1="510" x2="905.5" y2="819" stroke="#7ed27e" stroke-width="1.2" opacity=".8"/><line x1="665.3" y1="510" x2="904.5" y2="819" stroke="#1e6426" stroke-width="1.1"/>
<line x1="793.6" y1="676.3" x2="904.5" y2="819" stroke="#185a20" stroke-width="2"/>
<path d="M902.5 74 L902.5 572.5 M905.5 572.5 L905.5 676.5" stroke="#a8c8f0" stroke-width="1" fill="none" opacity=".6"/><path d="M903.5 74 L903.5 572.5 M904.5 572.5 L904.5 676.5" stroke="#0c1660" stroke-width="1.4" fill="none"/><line x1="904.5" y1="676.5" x2="904.5" y2="819" stroke="#1c1c90" stroke-width="1.3"/>
<line x1="968" y1="818.5" x2="1278" y2="817.4" stroke="#000" stroke-width="1.3"/><line x1="968" y1="818.5" x2="1278" y2="817.4" stroke="#8a2020" stroke-width="1.3" stroke-dasharray="2 3" opacity=".6"/><line x1="904.5" y1="818.9" x2="968" y2="818.6" stroke="#7a1818" stroke-width="1.6"/>
<line x1="127" y1="824" x2="904" y2="819.5" stroke="#222" stroke-width="1" stroke-dasharray="1 3"/>
<line x1="904.5" y1="821" x2="904.5" y2="934" stroke="#223322" stroke-width="1" stroke-dasharray="1 3"/>
<line x1="905" y1="821" x2="991" y2="934" stroke="#2a5a2a" stroke-width="1" stroke-dasharray="1 3"/>
<path d="M215.5 172.5 L558.8 523.3 L576.4 523.3 L576.4 527.5 L572.9 531.5 L559.3 531.5 L553.7 525.4 L544.5 525.4 L544.5 577.5 L579.7 577.5 L713 671.5 L730.6 671.5 L730.6 675.9 L725.7 681.3 L713.5 681.3 L699.8 671.5 L690.4 671.5 L690.4 722.3 L699.3 722.3 L904.5 810 L904.5 819.4 L894.7 819.4 L697.5 735 L690.5 735 L690.5 820.3 L682.3 820.3 L682.3 735.2 L579.4 735.7 L579.4 821.2 L570.4 821.2 L570.4 735.8 L397.7 736.5 L397.7 822.2 L389.4 822.2 L389.4 736.6 L223.4 737.2 L223.4 823.4 L215.3 823.4 Z M224.8 190.5 L306.4 273.3 L224.8 273.3 Z M224.6 283 L307.3 283 L307.3 357.5 L224.6 357.5 Z M315.6 283.4 L389.3 358 L315.6 358 Z M224.6 367.3 L389.4 367.3 L389.4 422.2 L224.6 422.2 Z M398.5 367.4 L452 422.3 L398.5 422.3 Z M398.5 431.3 L461.2 431.3 L544.5 517.2 L398.5 517.2 Z M224.5 431.2 L389.4 431.2 L389.4 517.2 L224.5 517.2 Z M224.2 525.5 L389.5 525.5 L389.5 577.5 L224.2 577.5 Z M398.5 525.5 L536.3 525.5 L536.3 577.5 L398.5 577.5 Z M224 585.6 L389.5 585.6 L389.5 664 L224 664 Z M398.5 585.6 L570.5 585.6 L570.5 663.2 L398.5 663.6 Z M579.5 586.4 L687.6 662.2 L579.5 662.2 Z M224 672.2 L389.5 672.2 L389.5 724.2 L224 724.2 Z M398.5 672 L570.5 671.6 L570.5 723.6 L398.5 724 Z M579.5 671.5 L682.2 671.5 L682.2 722.3 L579.5 723.4 Z" fill="#fff" fill-rule="evenodd" stroke="#000" stroke-width="1.15" stroke-linejoin="miter"/>
</svg>
<div class="a" style="left:4px;top:2px;font-size:12px">Face</div>
</div>

<div class="a" style="left:1278px;top:74px;width:2px;height:861px;background:#fff"></div>
<div id="meas" class="a">
<div class="a" style="left:0;top:0;width:1280px;height:1px;background:#fff"></div>
<div class="a" style="left:4px;top:1px;width:1px;height:30px;background:#a0a0a0"></div>
<div class="a" style="left:0;top:30px;width:5px;height:1px;background:#a0a0a0"></div>
<div class="a" style="left:52px;top:11px;font-size:11px;line-height:13px;color:#1a1a1a;letter-spacing:-0.15px">Mesures</div>
<div class="a" style="left:100px;top:6px;width:148px;height:22px;border-top:2px solid #8a8a8a;border-left:2px solid #8a8a8a;border-right:1px solid #fff;border-bottom:1px solid #fff;background:#f0f0f0"></div>
<div class="a" style="left:250px;top:2px;width:1px;height:30px;background:#8a8a8a"></div>
<div class="a" style="left:0;top:32px;width:1280px;height:1px;background:#a0a0a0"></div>
</div>
<div id="status" class="a">
<div class="a" style="left:0;top:0;width:1280px;height:1px;background:#fff"></div>
<div class="a" style="left:88px;top:4px;width:1px;height:22px;background:#a0a0a0"></div>
<svg class="a" style="left:3px;top:5px" width="20" height="20" viewBox="0 0 20 20"><circle cx="10" cy="10" r="8.6" fill="#f6ecd4" stroke="#7a5a24" stroke-width="2.2"/><path d="M10 15 L10 10" stroke="#b8a890" stroke-width="1.2"/><ellipse cx="10" cy="7.5" rx="3" ry="3.5" fill="none" stroke="#d09090" stroke-width="1.2"/></svg>
<svg class="a" style="left:31px;top:5px" width="20" height="20" viewBox="0 0 20 20"><circle cx="10" cy="10" r="8.6" fill="#f6ecd4" stroke="#7a5a24" stroke-width="2.2"/><circle cx="10" cy="5.5" r="1.6" fill="#111"/><path d="M8 8 L12 8 L12 12 L11 12 L11 16 L9 16 L9 12 L8 12Z" fill="#111"/></svg>
<svg class="a" style="left:59px;top:5px" width="20" height="20" viewBox="0 0 20 20"><circle cx="10" cy="10" r="8.6" fill="#f6ecd4" stroke="#7a5a24" stroke-width="2.2"/><path d="M13 6 C11 4 6 5 6 10 C6 15 12 16 14 12 L11 12" fill="none" stroke="#c8b890" stroke-width="1.4"/></svg>
<svg class="a" style="left:96px;top:5px" width="21" height="21" viewBox="0 0 21 21"><circle cx="10.5" cy="10.5" r="9.2" fill="#e8f2fa" stroke="#3a5a78" stroke-width="2.2"/><path d="M7 8 C7 4 14 4 14 8 C14 11 10.5 11 10.5 13.5" fill="none" stroke="#111" stroke-width="2.2"/><circle cx="10.5" cy="16.5" r="1.4" fill="#111"/></svg>
<div class="a" style="left:124px;top:7px;font-size:13px;line-height:15px;color:#1a1a1a;white-space:nowrap;letter-spacing:0.075px">Sélectionnez les éléments à effacer ou tracez une zone de sélection autour de plusieurs éléments. Maj=masquer, Ctrl=adoucir/lis</div>
</div>
<div id="task" class="a">
<svg class="a" style="left:8px;top:-6px" width="44" height="44" viewBox="0 0 44 44"><defs><radialGradient id="orb" cx="50%" cy="35%" r="60%"><stop offset="0" stop-color="#8ad0f8"/><stop offset=".6" stop-color="#2a7ab8"/><stop offset="1" stop-color="#0a2a50"/></radialGradient></defs><circle cx="22" cy="22" r="20" fill="#1a1a2a"/><circle cx="22" cy="22" r="18.5" fill="url(#orb)"/><path d="M13 15 C15 13 18 13 21 14 L20 21 C17 20 15 20 12 21Z" fill="#f05a20"/><path d="M22 14 C25 15 28 15 31 13 L30 20 C27 22 24 22 21 21Z" fill="#80c020"/><path d="M12 22 C15 21 17 21 20 22 L19 29 C16 28 14 28 11 29Z" fill="#30a0f0"/><path d="M21 22 C24 23 27 23 30 21 L29 28 C26 30 23 30 20 29Z" fill="#f8c020"/><ellipse cx="22" cy="12" rx="12" ry="6" fill="#fff" opacity=".25"/></svg>
<div class="a" style="left:64px;top:6px;width:2px;height:2px;background:rgba(40,8,18,.75);box-shadow:1px 1px 0 rgba(255,200,210,.25)"></div><div class="a" style="left:68px;top:6px;width:2px;height:2px;background:rgba(40,8,18,.75);box-shadow:1px 1px 0 rgba(255,200,210,.25)"></div><div class="a" style="left:64px;top:10px;width:2px;height:2px;background:rgba(40,8,18,.75);box-shadow:1px 1px 0 rgba(255,200,210,.25)"></div><div class="a" style="left:68px;top:10px;width:2px;height:2px;background:rgba(40,8,18,.75);box-shadow:1px 1px 0 rgba(255,200,210,.25)"></div><div class="a" style="left:64px;top:14px;width:2px;height:2px;background:rgba(40,8,18,.75);box-shadow:1px 1px 0 rgba(255,200,210,.25)"></div><div class="a" style="left:68px;top:14px;width:2px;height:2px;background:rgba(40,8,18,.75);box-shadow:1px 1px 0 rgba(255,200,210,.25)"></div><div class="a" style="left:64px;top:18px;width:2px;height:2px;background:rgba(40,8,18,.75);box-shadow:1px 1px 0 rgba(255,200,210,.25)"></div><div class="a" style="left:68px;top:18px;width:2px;height:2px;background:rgba(40,8,18,.75);box-shadow:1px 1px 0 rgba(255,200,210,.25)"></div><div class="a" style="left:64px;top:22px;width:2px;height:2px;background:rgba(40,8,18,.75);box-shadow:1px 1px 0 rgba(255,200,210,.25)"></div><div class="a" style="left:68px;top:22px;width:2px;height:2px;background:rgba(40,8,18,.75);box-shadow:1px 1px 0 rgba(255,200,210,.25)"></div>
<div class="a" style="left:349px;top:6px;width:2px;height:2px;background:rgba(40,8,18,.75);box-shadow:1px 1px 0 rgba(255,200,210,.25)"></div><div class="a" style="left:353px;top:6px;width:2px;height:2px;background:rgba(40,8,18,.75);box-shadow:1px 1px 0 rgba(255,200,210,.25)"></div><div class="a" style="left:349px;top:10px;width:2px;height:2px;background:rgba(40,8,18,.75);box-shadow:1px 1px 0 rgba(255,200,210,.25)"></div><div class="a" style="left:353px;top:10px;width:2px;height:2px;background:rgba(40,8,18,.75);box-shadow:1px 1px 0 rgba(255,200,210,.25)"></div><div class="a" style="left:349px;top:14px;width:2px;height:2px;background:rgba(40,8,18,.75);box-shadow:1px 1px 0 rgba(255,200,210,.25)"></div><div class="a" style="left:353px;top:14px;width:2px;height:2px;background:rgba(40,8,18,.75);box-shadow:1px 1px 0 rgba(255,200,210,.25)"></div><div class="a" style="left:349px;top:18px;width:2px;height:2px;background:rgba(40,8,18,.75);box-shadow:1px 1px 0 rgba(255,200,210,.25)"></div><div class="a" style="left:353px;top:18px;width:2px;height:2px;background:rgba(40,8,18,.75);box-shadow:1px 1px 0 rgba(255,200,210,.25)"></div><div class="a" style="left:349px;top:22px;width:2px;height:2px;background:rgba(40,8,18,.75);box-shadow:1px 1px 0 rgba(255,200,210,.25)"></div><div class="a" style="left:353px;top:22px;width:2px;height:2px;background:rgba(40,8,18,.75);box-shadow:1px 1px 0 rgba(255,200,210,.25)"></div>
<div class="a" style="left:1092px;top:6px;width:2px;height:2px;background:rgba(40,8,18,.75);box-shadow:1px 1px 0 rgba(255,200,210,.25)"></div><div class="a" style="left:1096px;top:6px;width:2px;height:2px;background:rgba(40,8,18,.75);box-shadow:1px 1px 0 rgba(255,200,210,.25)"></div><div class="a" style="left:1092px;top:10px;width:2px;height:2px;background:rgba(40,8,18,.75);box-shadow:1px 1px 0 rgba(255,200,210,.25)"></div><div class="a" style="left:1096px;top:10px;width:2px;height:2px;background:rgba(40,8,18,.75);box-shadow:1px 1px 0 rgba(255,200,210,.25)"></div><div class="a" style="left:1092px;top:14px;width:2px;height:2px;background:rgba(40,8,18,.75);box-shadow:1px 1px 0 rgba(255,200,210,.25)"></div><div class="a" style="left:1096px;top:14px;width:2px;height:2px;background:rgba(40,8,18,.75);box-shadow:1px 1px 0 rgba(255,200,210,.25)"></div><div class="a" style="left:1092px;top:18px;width:2px;height:2px;background:rgba(40,8,18,.75);box-shadow:1px 1px 0 rgba(255,200,210,.25)"></div><div class="a" style="left:1096px;top:18px;width:2px;height:2px;background:rgba(40,8,18,.75);box-shadow:1px 1px 0 rgba(255,200,210,.25)"></div><div class="a" style="left:1092px;top:22px;width:2px;height:2px;background:rgba(40,8,18,.75);box-shadow:1px 1px 0 rgba(255,200,210,.25)"></div><div class="a" style="left:1096px;top:22px;width:2px;height:2px;background:rgba(40,8,18,.75);box-shadow:1px 1px 0 rgba(255,200,210,.25)"></div>
<svg class="a" style="left:81px;top:6px" width="18" height="18" viewBox="0 0 18 18"><rect x="1" y="2" width="15" height="12" fill="#3a7ad8" stroke="#ddd" stroke-width="1"/><rect x="2" y="11" width="13" height="2" fill="#222"/></svg>
<svg class="a" style="left:104px;top:6px" width="18" height="18" viewBox="0 0 18 18"><circle cx="9" cy="9" r="6" fill="#2a8ae0"/><path d="M5 9 L13 9" stroke="#fff" stroke-width="2"/><path d="M2 14 C4 4 14 1 16 3" fill="none" stroke="#f0b000" stroke-width="1.6"/></svg>
<svg class="a" style="left:127px;top:6px" width="18" height="18" viewBox="0 0 18 18"><rect x="1" y="2" width="16" height="13" fill="#1a3a8a" stroke="#ccd" stroke-width="1"/><rect x="3" y="4" width="7" height="4" fill="#fff"/><rect x="7" y="8" width="8" height="5" fill="#cde"/></svg>
<svg class="a" style="left:150px;top:6px" width="18" height="18" viewBox="0 0 18 18"><rect x="2" y="1" width="14" height="15" fill="#fff" stroke="#333" stroke-width="1"/><rect x="2" y="1" width="14" height="3" fill="#1a2a6a"/><path d="M6 10 L8 8 M6 10 L8 12 M12 8 L10 10 L12 12" stroke="#111" stroke-width="1.2"/></svg>
<svg class="a" style="left:173px;top:6px" width="18" height="18" viewBox="0 0 18 18"><rect x="1" y="1" width="16" height="16" fill="#a8c8e8" stroke="#ddd"/><circle cx="9" cy="6" r="3" fill="#c87060"/><path d="M4 16 L9 9 L14 16Z" fill="#c87060"/></svg>
<svg class="a" style="left:196px;top:6px" width="18" height="18" viewBox="0 0 18 18"><rect x="1" y="1" width="16" height="16" fill="#fff" stroke="#ccc"/><path d="M2 2 L10 2 L2 12Z" fill="#8a4ae0"/><path d="M10 2 L16 2 L16 12Z" fill="#f0a010"/><path d="M2 16 L2 10 L9 16Z" fill="#20a040"/><path d="M16 16 L10 16 L16 9Z" fill="#e02020"/></svg>
<svg class="a" style="left:219px;top:6px" width="18" height="18" viewBox="0 0 18 18"><path d="M3 1 L12 1 L15 4 L15 17 L3 17Z" fill="#fafafa" stroke="#ccc"/></svg>
<svg class="a" style="left:242px;top:6px" width="18" height="18" viewBox="0 0 18 18"><circle cx="9" cy="9" r="7.5" fill="#5aa0e0" stroke="#2a5a90"/><circle cx="9" cy="9" r="4" fill="#9ad0f8"/></svg>
<svg class="a" style="left:265px;top:6px" width="18" height="18" viewBox="0 0 18 18"><rect x="1" y="2" width="16" height="14" rx="3" fill="#f8d880" stroke="#a08030"/><circle cx="9" cy="9" r="5" fill="#fff2c0" stroke="#c09030"/><path d="M6 9 L9 11 L12 6" fill="none" stroke="#a06010" stroke-width="1.3"/></svg>
<svg class="a" style="left:288px;top:6px" width="18" height="18" viewBox="0 0 18 18"><rect x="1" y="1" width="16" height="16" rx="3" fill="#1a3a6a" stroke="#6a8ab0"/><path d="M6 5 L5 13 M10 5 L9 13 M12 5 L11 13" stroke="#fff" stroke-width="1.6"/></svg>
<svg class="a" style="left:311px;top:6px" width="18" height="18" viewBox="0 0 18 18"><circle cx="9" cy="9" r="8" fill="#1a3aa0"/><path d="M2 7 C7 4 12 10 17 7 L17 10 C12 13 6 7 2 11Z" fill="#fff"/></svg>
<div class="tbtn" style="left:365px;width:156px"><span>stade bordeaux - Re...</span></div>
<div class="tbtn" style="left:525px;width:156px"><span>Architecte en herbe ...</span></div>
<div class="tbtn act" style="left:685px;width:156px"><span>Sans titre - SketchUp</span></div>
<div class="tbtn" style="left:846px;width:155px"><span>Sans titre - Paint</span></div>
<svg class="a" style="left:373px;top:7px" width="16" height="16" viewBox="0 0 16 16"><circle cx="8" cy="8" r="7" fill="#6ab0e8" stroke="#2a5a8a"/><circle cx="8" cy="8" r="3.5" fill="#b8e0fa"/></svg>
<svg class="a" style="left:533px;top:7px" width="16" height="16" viewBox="0 0 16 16"><circle cx="8" cy="8" r="7" fill="#6ab0e8" stroke="#2a5a8a"/><circle cx="8" cy="8" r="3.5" fill="#b8e0fa"/></svg>
<svg class="a" style="left:693px;top:6px" width="18" height="18" viewBox="0 0 18 18"><path d="M2 10 L9 4 L12 7 L5 13Z" fill="#f0b070" stroke="#222"/><path d="M3 11 L6 14 L4 17 L1 13Z" fill="#eee" stroke="#222"/><path d="M9 4 L16 2 L6 15 L5 13Z" fill="#d02020" stroke="#222"/></svg>
<svg class="a" style="left:854px;top:5px" width="18" height="20" viewBox="0 0 18 20"><path d="M5 2 L9 10 L7 18 L11 18 L12 10 L15 3" fill="#c04030" stroke="#402010"/><path d="M3 2 L7 4 L9 2 M11 4 L15 2" stroke="#f0d0a0" stroke-width="2"/></svg>
<div class="a" style="left:1108px;top:6px;color:#fff;font-size:12px;line-height:14px">FR</div>
<svg class="a" style="left:1135px;top:8px" width="16" height="16" viewBox="0 0 16 16"><circle cx="8" cy="8" r="6" fill="#e0b060"/><circle cx="7" cy="7" r="3" fill="#f8d890"/></svg>
<svg class="a" style="left:1152px;top:4px" width="18" height="18" viewBox="0 0 18 18"><ellipse cx="9" cy="9" rx="8" ry="7.5" fill="#5ac020" stroke="#3a8a10"/><path d="M5 9 L8 12 L13 5" fill="none" stroke="#fff" stroke-width="2.2"/></svg>
<svg class="a" style="left:1172px;top:5px" width="18" height="18" viewBox="0 0 18 18"><circle cx="7" cy="5" r="3" fill="#f0b820"/><path d="M2 14 C2 8 12 8 12 14Z" fill="#f0b820"/><circle cx="12" cy="9" r="3" fill="#e8a810"/><path d="M9 16 L13 9 L17 16Z" fill="#f8d020" stroke="#8a6a00"/><path d="M13 11 L13 14" stroke="#111"/></svg>
<svg class="a" style="left:1199px;top:4px" width="18" height="18" viewBox="0 0 18 18"><rect x="1" y="2" width="10" height="8" fill="#2a6ad8" stroke="#fff"/><rect x="5" y="6" width="10" height="8" fill="#2a6ad8" stroke="#fff"/><circle cx="11" cy="14" r="4" fill="#30a0e0"/><path d="M9 13 L13 15" stroke="#50d050"/></svg>
<svg class="a" style="left:1217px;top:5px" width="18" height="18" viewBox="0 0 18 18"><path d="M2 6 L5 6 L10 2 L10 16 L5 12 L2 12Z" fill="#eee" stroke="#ccc"/><path d="M12 7 C13 8 13 10 12 11 M14 5 C16 7 16 11 14 13" fill="none" stroke="#8ad08a" stroke-width="1.2"/></svg>
<div class="a" style="left:1239px;top:7px;color:#fff;font-size:13px;line-height:15px">11:16</div>
</div>
</body></html>
